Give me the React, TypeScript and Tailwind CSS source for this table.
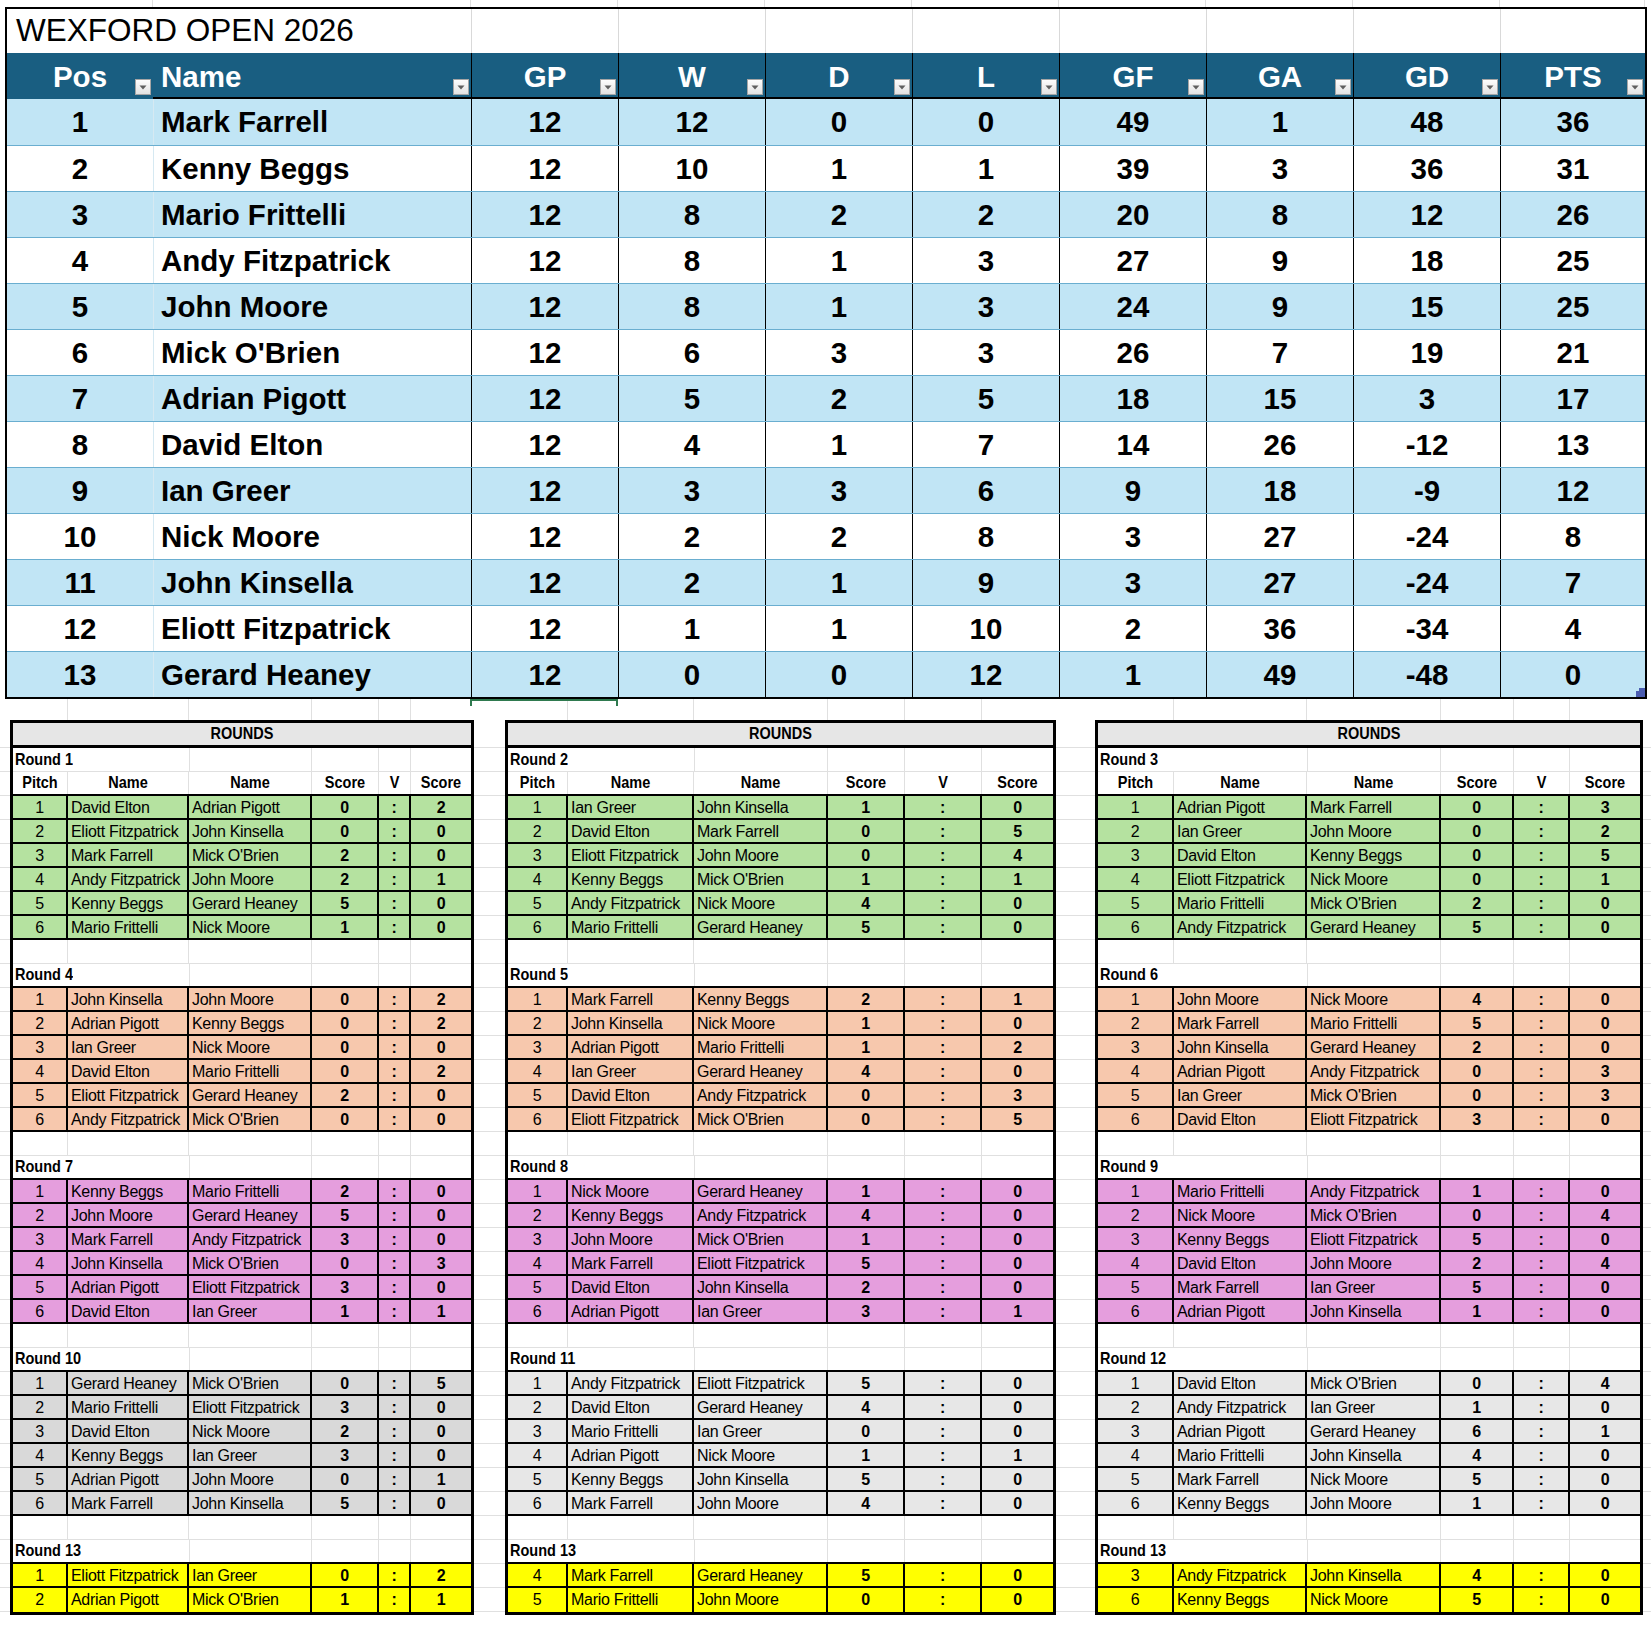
import { Fragment } from "react";

type Standing = [number, string, number, number, number, number, number, number, number, number];
type Match = [number, string, string, number, number];
type Round = { label: string; color: string; matches: Match[] };

const SANS = "font-['Liberation_Sans',Arial,sans-serif]";
const LABEL = "font-['Liberation_Sans',Arial,sans-serif] text-[14.5px] font-bold";
const TOP_COLS = "grid-cols-[146px_318px_147px_147px_147px_147px_147px_147px_147px_145px]";
const GRIDLINE = "border-[#e0e0e0]";

const standings: Standing[] = [
  [1, "Mark Farrell", 12, 12, 0, 0, 49, 1, 48, 36],
  [2, "Kenny Beggs", 12, 10, 1, 1, 39, 3, 36, 31],
  [3, "Mario Frittelli", 12, 8, 2, 2, 20, 8, 12, 26],
  [4, "Andy Fitzpatrick", 12, 8, 1, 3, 27, 9, 18, 25],
  [5, "John Moore", 12, 8, 1, 3, 24, 9, 15, 25],
  [6, "Mick O'Brien", 12, 6, 3, 3, 26, 7, 19, 21],
  [7, "Adrian Pigott", 12, 5, 2, 5, 18, 15, 3, 17],
  [8, "David Elton", 12, 4, 1, 7, 14, 26, -12, 13],
  [9, "Ian Greer", 12, 3, 3, 6, 9, 18, -9, 12],
  [10, "Nick Moore", 12, 2, 2, 8, 3, 27, -24, 8],
  [11, "John Kinsella", 12, 2, 1, 9, 3, 27, -24, 7],
  [12, "Eliott Fitzpatrick", 12, 1, 1, 10, 2, 36, -34, 4],
  [13, "Gerard Heaney", 12, 0, 0, 12, 1, 49, -48, 0],
];

const statCols = ["GP", "W", "D", "L", "GF", "GA", "GD", "PTS"];

const GREEN = "bg-[#b5e2a0]";
const ORANGE = "bg-[#f7c8ad]";
const PINK = "bg-[#e59edd]";
const GREY_DARK = "bg-[#d9d9d9]";
const GREY = "bg-[#e7e7e7]";
const YELLOW = "bg-[#ffff00]";

const panels: { width: string; grid: string; rounds: Round[] }[] = [
  {
    width: "w-[464px]",
    grid: "grid-cols-[55px_121px_123px_67px_32px_60px]",
    rounds: [
      {
        label: "Round 1",
        color: GREEN,
        matches: [
          [1, "David Elton", "Adrian Pigott", 0, 2],
          [2, "Eliott Fitzpatrick", "John Kinsella", 0, 0],
          [3, "Mark Farrell", "Mick O'Brien", 2, 0],
          [4, "Andy Fitzpatrick", "John Moore", 2, 1],
          [5, "Kenny Beggs", "Gerard Heaney", 5, 0],
          [6, "Mario Frittelli", "Nick Moore", 1, 0],
        ],
      },
      {
        label: "Round 4",
        color: ORANGE,
        matches: [
          [1, "John Kinsella", "John Moore", 0, 2],
          [2, "Adrian Pigott", "Kenny Beggs", 0, 2],
          [3, "Ian Greer", "Nick Moore", 0, 0],
          [4, "David Elton", "Mario Frittelli", 0, 2],
          [5, "Eliott Fitzpatrick", "Gerard Heaney", 2, 0],
          [6, "Andy Fitzpatrick", "Mick O'Brien", 0, 0],
        ],
      },
      {
        label: "Round 7",
        color: PINK,
        matches: [
          [1, "Kenny Beggs", "Mario Frittelli", 2, 0],
          [2, "John Moore", "Gerard Heaney", 5, 0],
          [3, "Mark Farrell", "Andy Fitzpatrick", 3, 0],
          [4, "John Kinsella", "Mick O'Brien", 0, 3],
          [5, "Adrian Pigott", "Eliott Fitzpatrick", 3, 0],
          [6, "David Elton", "Ian Greer", 1, 1],
        ],
      },
      {
        label: "Round 10",
        color: GREY_DARK,
        matches: [
          [1, "Gerard Heaney", "Mick O'Brien", 0, 5],
          [2, "Mario Frittelli", "Eliott Fitzpatrick", 3, 0],
          [3, "David Elton", "Nick Moore", 2, 0],
          [4, "Kenny Beggs", "Ian Greer", 3, 0],
          [5, "Adrian Pigott", "John Moore", 0, 1],
          [6, "Mark Farrell", "John Kinsella", 5, 0],
        ],
      },
      {
        label: "Round 13",
        color: YELLOW,
        matches: [
          [1, "Eliott Fitzpatrick", "Ian Greer", 0, 2],
          [2, "Adrian Pigott", "Mick O'Brien", 1, 1],
        ],
      },
    ],
  },
  {
    width: "w-[551px]",
    grid: "grid-cols-[60px_126px_134px_77px_77px_71px]",
    rounds: [
      {
        label: "Round 2",
        color: GREEN,
        matches: [
          [1, "Ian Greer", "John Kinsella", 1, 0],
          [2, "David Elton", "Mark Farrell", 0, 5],
          [3, "Eliott Fitzpatrick", "John Moore", 0, 4],
          [4, "Kenny Beggs", "Mick O'Brien", 1, 1],
          [5, "Andy Fitzpatrick", "Nick Moore", 4, 0],
          [6, "Mario Frittelli", "Gerard Heaney", 5, 0],
        ],
      },
      {
        label: "Round 5",
        color: ORANGE,
        matches: [
          [1, "Mark Farrell", "Kenny Beggs", 2, 1],
          [2, "John Kinsella", "Nick Moore", 1, 0],
          [3, "Adrian Pigott", "Mario Frittelli", 1, 2],
          [4, "Ian Greer", "Gerard Heaney", 4, 0],
          [5, "David Elton", "Andy Fitzpatrick", 0, 3],
          [6, "Eliott Fitzpatrick", "Mick O'Brien", 0, 5],
        ],
      },
      {
        label: "Round 8",
        color: PINK,
        matches: [
          [1, "Nick Moore", "Gerard Heaney", 1, 0],
          [2, "Kenny Beggs", "Andy Fitzpatrick", 4, 0],
          [3, "John Moore", "Mick O'Brien", 1, 0],
          [4, "Mark Farrell", "Eliott Fitzpatrick", 5, 0],
          [5, "David Elton", "John Kinsella", 2, 0],
          [6, "Adrian Pigott", "Ian Greer", 3, 1],
        ],
      },
      {
        label: "Round 11",
        color: GREY,
        matches: [
          [1, "Andy Fitzpatrick", "Eliott Fitzpatrick", 5, 0],
          [2, "David Elton", "Gerard Heaney", 4, 0],
          [3, "Mario Frittelli", "Ian Greer", 0, 0],
          [4, "Adrian Pigott", "Nick Moore", 1, 1],
          [5, "Kenny Beggs", "John Kinsella", 5, 0],
          [6, "Mark Farrell", "John Moore", 4, 0],
        ],
      },
      {
        label: "Round 13",
        color: YELLOW,
        matches: [
          [4, "Mark Farrell", "Gerard Heaney", 5, 0],
          [5, "Mario Frittelli", "John Moore", 0, 0],
        ],
      },
    ],
  },
  {
    width: "w-[548px]",
    grid: "grid-cols-[76px_133px_134px_73px_56px_70px]",
    rounds: [
      {
        label: "Round 3",
        color: GREEN,
        matches: [
          [1, "Adrian Pigott", "Mark Farrell", 0, 3],
          [2, "Ian Greer", "John Moore", 0, 2],
          [3, "David Elton", "Kenny Beggs", 0, 5],
          [4, "Eliott Fitzpatrick", "Nick Moore", 0, 1],
          [5, "Mario Frittelli", "Mick O'Brien", 2, 0],
          [6, "Andy Fitzpatrick", "Gerard Heaney", 5, 0],
        ],
      },
      {
        label: "Round 6",
        color: ORANGE,
        matches: [
          [1, "John Moore", "Nick Moore", 4, 0],
          [2, "Mark Farrell", "Mario Frittelli", 5, 0],
          [3, "John Kinsella", "Gerard Heaney", 2, 0],
          [4, "Adrian Pigott", "Andy Fitzpatrick", 0, 3],
          [5, "Ian Greer", "Mick O'Brien", 0, 3],
          [6, "David Elton", "Eliott Fitzpatrick", 3, 0],
        ],
      },
      {
        label: "Round 9",
        color: PINK,
        matches: [
          [1, "Mario Frittelli", "Andy Fitzpatrick", 1, 0],
          [2, "Nick Moore", "Mick O'Brien", 0, 4],
          [3, "Kenny Beggs", "Eliott Fitzpatrick", 5, 0],
          [4, "David Elton", "John Moore", 2, 4],
          [5, "Mark Farrell", "Ian Greer", 5, 0],
          [6, "Adrian Pigott", "John Kinsella", 1, 0],
        ],
      },
      {
        label: "Round 12",
        color: GREY,
        matches: [
          [1, "David Elton", "Mick O'Brien", 0, 4],
          [2, "Andy Fitzpatrick", "Ian Greer", 1, 0],
          [3, "Adrian Pigott", "Gerard Heaney", 6, 1],
          [4, "Mario Frittelli", "John Kinsella", 4, 0],
          [5, "Mark Farrell", "Nick Moore", 5, 0],
          [6, "Kenny Beggs", "John Moore", 1, 0],
        ],
      },
      {
        label: "Round 13",
        color: YELLOW,
        matches: [
          [3, "Andy Fitzpatrick", "John Kinsella", 4, 0],
          [6, "Kenny Beggs", "Nick Moore", 5, 0],
        ],
      },
    ],
  },
];

const FilterButton = () => (
  <span className="absolute right-[2px] bottom-[2px] flex h-[16px] w-[16px] items-center justify-center border border-[#a5a5a5] bg-linear-to-b from-[#fdfdfd] to-[#e2e2e2]">
    <svg width="8" height="5" viewBox="0 0 8 5">
      <path d="M0.5 0.5h7L4 4.5z" fill="#5f5f5f" />
    </svg>
  </span>
);

function Standings() {
  return (
    <div className={`${SANS} pl-[5px]`}>
      {/* excel gridlines above the table */}
      <div className={`grid ${TOP_COLS} h-[7px] pl-[2px]`}>
        {Array.from({ length: 10 }).map((_, i) => (
          <div key={i} className={`border-r ${GRIDLINE}`} />
        ))}
      </div>

      <div className="relative w-[1642px] border-2 border-black">
        {/* title row */}
        <div className={`grid ${TOP_COLS} h-[44px]`}>
          <div className="col-span-2 flex items-center pl-[9px] text-[31.5px] leading-none whitespace-nowrap text-black">
            WEXFORD OPEN 2026
          </div>
          {statCols.map((c) => (
            <div key={c} className="border-l border-[#d9d9d9]" />
          ))}
        </div>

        {/* header */}
        <div className={`grid ${TOP_COLS} h-[46px] bg-[#195e81] text-[29.5px] font-bold leading-none text-white`}>
          <div className="relative flex items-center justify-center border-b-2 border-[#195e81] pt-[3px]">
            Pos
            <FilterButton />
          </div>
          <div className="relative flex items-center border-b-2 border-black pt-[3px] pl-[8px]">
            Name
            <FilterButton />
          </div>
          {statCols.map((c) => (
            <div key={c} className="relative flex items-center justify-center border-b-2 border-l border-black pt-[3px]">
              {c}
              <FilterButton />
            </div>
          ))}
        </div>

        {/* rows */}
        {standings.map((r, i) => (
          <div
            key={r[0]}
            className={`grid ${TOP_COLS} h-[46px] text-[29.5px] font-bold leading-none text-black ${
              i > 0 ? "border-t border-[#6aaed0]" : ""
            } ${i % 2 === 0 ? "bg-[#c1e5f5]" : "bg-white"}`}
          >
            <div className="flex items-center justify-center">{r[0]}</div>
            <div className="flex items-center whitespace-nowrap border-l border-[#d6e9f2] pl-[7px]">{r[1]}</div>
            {r.slice(2).map((v, j) => (
              <div key={j} className="flex items-center justify-center border-l border-black">
                {v}
              </div>
            ))}
          </div>
        ))}

        {/* table resize handle */}
        <svg className="absolute right-0 bottom-0" width="9" height="9" viewBox="0 0 9 9">
          <polygon points="3,0 9,0 9,9 0,9 0,3 3,3" fill="#4a5cb0" />
        </svg>

        {/* selected cell outline under GP */}
        <div className="absolute -bottom-[9px] left-[463px] h-[7px] w-[148px] border-x-2 border-t-2 border-[#2f7a4f]" />
      </div>
    </div>
  );
}

function GapColumn({ width }: { width: string }) {
  return (
    <div className={`flex flex-col ${width}`}>
      <div className="h-[21px]" />
      <div className={`h-[28px] border-b ${GRIDLINE}`} />
      {Array.from({ length: 36 }).map((_, i) => (
        <div key={i} className={`h-[24px] border-b ${GRIDLINE}`} />
      ))}
    </div>
  );
}

function BlankRow({ grid }: { grid: string }) {
  return (
    <div className={`grid ${grid} h-[24px] border-b ${GRIDLINE}`}>
      {Array.from({ length: 6 }).map((_, i) => (
        <div key={i} className={i < 5 ? `border-r ${GRIDLINE}` : ""} />
      ))}
    </div>
  );
}

function LabelRow({ grid, label, first }: { grid: string; label: string; first: boolean }) {
  return (
    <div className={`grid ${grid} h-[24px] ${first ? `border-b ${GRIDLINE}` : "border-b-2 border-black"}`}>
      <div className={`col-span-2 flex items-center whitespace-nowrap pl-[2px] ${LABEL}`}>
        <span className="inline-block scale-y-[1.15]">{label}</span>
      </div>
      <div className={`border-l border-r ${GRIDLINE}`} />
      <div className={`border-r ${GRIDLINE}`} />
      <div className={`border-r ${GRIDLINE}`} />
      <div />
    </div>
  );
}

function HeaderRow({ grid }: { grid: string }) {
  const heads = ["Pitch", "Name", "Name", "Score", "V", "Score"];
  return (
    <div className={`grid ${grid} h-[24px] border-b-2 border-black ${LABEL}`}>
      {heads.map((h, i) => (
        <div key={i} className={`flex items-center justify-center ${i < 5 ? `border-r ${GRIDLINE}` : ""}`}>
          <span className="inline-block scale-y-[1.15]">{h}</span>
        </div>
      ))}
    </div>
  );
}

function MatchRow({ grid, color, m, last }: { grid: string; color: string; m: Match; last: boolean }) {
  const [pitch, home, away, s1, s2] = m;
  return (
    <div className={`grid ${grid} h-[24px] ${color} ${last ? "" : "border-b-2 border-black"} text-[16px] tracking-[-0.3px] text-black`}>
      <div className="flex items-center justify-center border-r-2 border-black">{pitch}</div>
      <div className="flex items-center overflow-hidden whitespace-nowrap border-r-2 border-black pl-[3px]">{home}</div>
      <div className="flex items-center overflow-hidden whitespace-nowrap border-r-2 border-black pl-[3px]">{away}</div>
      <div className="flex items-center justify-center border-r-2 border-black font-bold">{s1}</div>
      <div className="flex items-center justify-center border-r-2 border-black font-bold">:</div>
      <div className="flex items-center justify-center font-bold">{s2}</div>
    </div>
  );
}

function Panel({ width, grid, rounds }: { width: string; grid: string; rounds: Round[] }) {
  return (
    <div className={`flex flex-col ${width}`}>
      <div className={`grid ${grid} h-[21px] px-[3px]`}>
        {Array.from({ length: 6 }).map((_, i) => (
          <div key={i} className={i < 5 ? `border-r ${GRIDLINE}` : ""} />
        ))}
      </div>
      <div className="border-[3px] border-black bg-white">
        <div className={`flex h-[25px] items-center justify-center border-b-[3px] border-black bg-[#e6e6e6] ${LABEL}`}>
          <span className="inline-block scale-y-[1.15]">ROUNDS</span>
        </div>
        {rounds.map((r, ri) => (
          <Fragment key={ri}>
            {ri > 0 && <BlankRow grid={grid} />}
            <LabelRow grid={grid} label={r.label} first={ri === 0} />
            {ri === 0 && <HeaderRow grid={grid} />}
            {r.matches.map((m, mi) => (
              <MatchRow
                key={mi}
                grid={grid}
                color={r.color}
                m={m}
                last={ri === rounds.length - 1 && mi === r.matches.length - 1}
              />
            ))}
          </Fragment>
        ))}
      </div>
    </div>
  );
}

export default function App() {
  return (
    <div className={`h-[1626px] w-[1651px] overflow-hidden bg-white ${SANS}`}>
      <Standings />
      <div className="flex items-start">
        <GapColumn width="w-[10px]" />
        <Panel {...panels[0]} />
        <GapColumn width="w-[31px]" />
        <Panel {...panels[1]} />
        <GapColumn width="w-[39px]" />
        <Panel {...panels[2]} />
        <GapColumn width="w-[8px]" />
      </div>
    </div>
  );
}
